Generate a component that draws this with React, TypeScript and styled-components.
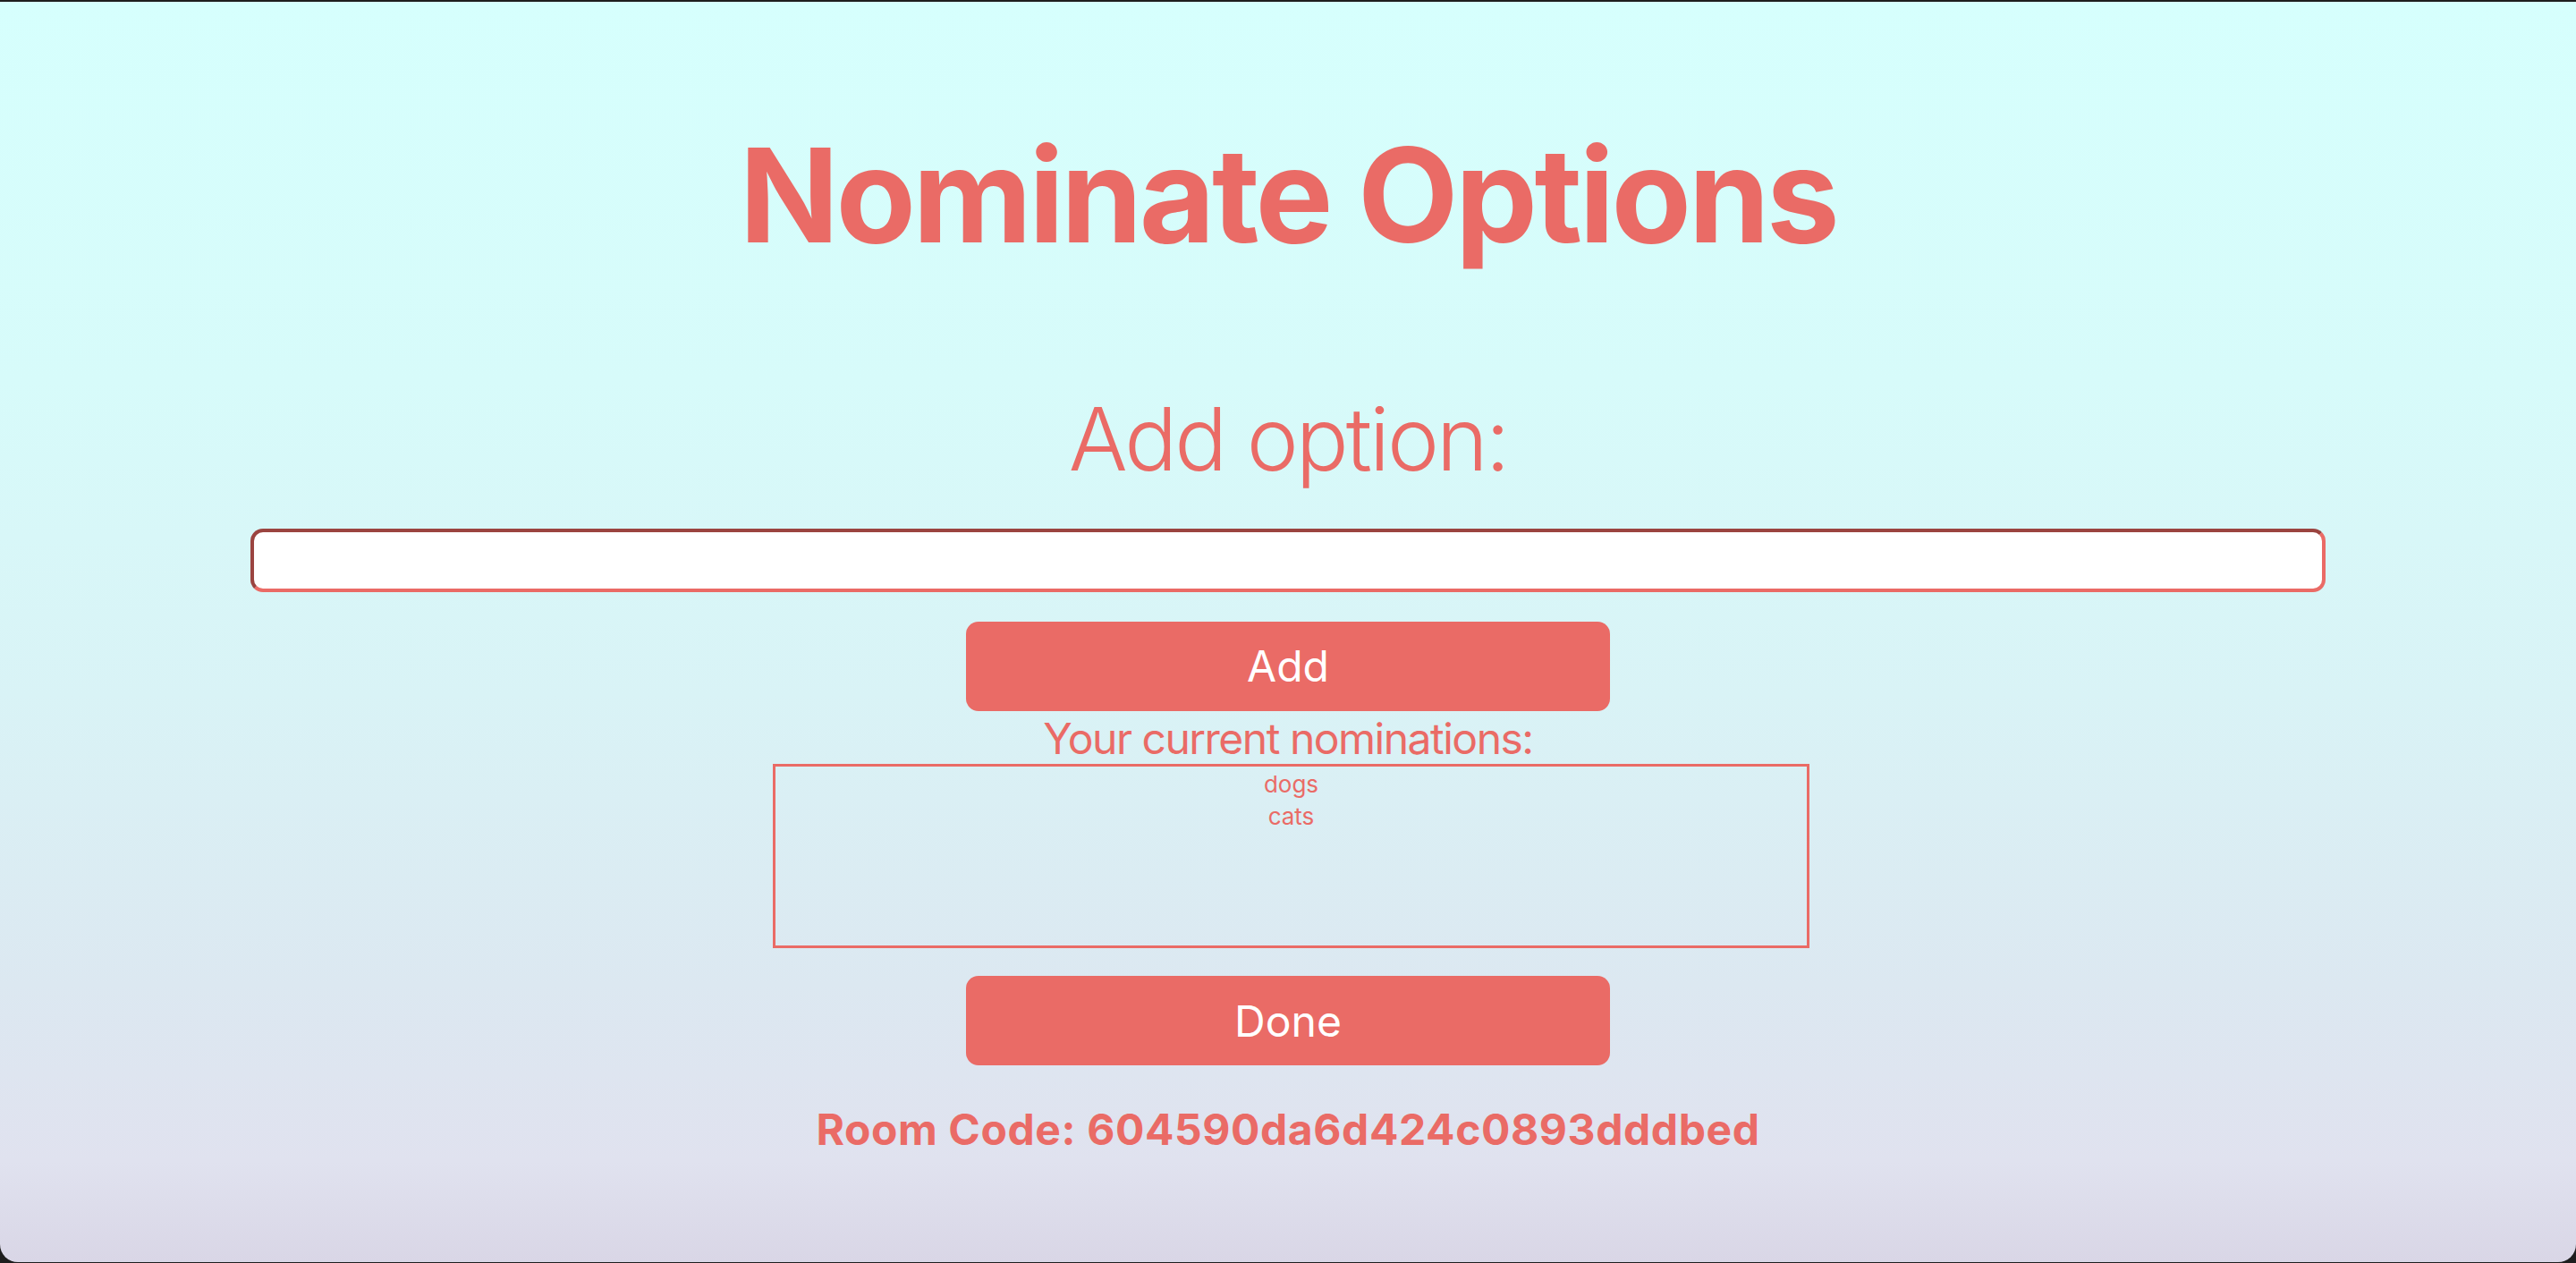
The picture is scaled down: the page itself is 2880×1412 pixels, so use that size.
import React, { FC, useState } from "react";
import styled, { createGlobalStyle } from "styled-components";

const coral = "#ea6b66";

const GlobalStyle = createGlobalStyle`
  html, body {
    margin: 0;
    padding: 0;
    height: 100%;
    background: #1e1e1e;
  }
  #root {
    height: 100%;
  }
  * {
    box-sizing: border-box;
  }
`;

const Window = styled.div`
  height: 1409px;
  margin-top: 2px;
  border-radius: 0 0 20px 20px;
  overflow: hidden;
  background: linear-gradient(
    180deg,
    #d6fffd 0%,
    #d7fbfa 30%,
    #d9f3f6 55%,
    #dce8f1 78%,
    #e0e2ef 92%,
    #d9d6e6 100%
  );
  display: flex;
  flex-direction: column;
  align-items: center;
  padding-top: 129px;
  font-family: Inter, "Noto Sans", sans-serif;
  color: ${coral};
`;

const Title = styled.h1`
  margin: 0;
  font-size: 146px;
  line-height: 1.2;
  font-weight: 700;
  letter-spacing: -3.5px;
`;

const SubTitle = styled.h2`
  margin: 126px 0 0;
  font-size: 98px;
  line-height: 1.2;
  font-weight: 300;
  letter-spacing: -3px;
`;

const OptionInput = styled.input`
  margin-top: 41px;
  width: 2320px;
  height: 71px;
  border: 4px solid;
  border-color: #9b4440 ${coral} ${coral} #9b4440;
  border-radius: 14px;
  background: #fff;
  font-family: inherit;
  font-size: 32px;
  padding: 0 16px;
  outline: none;
`;

const Button = styled.button<{ gap: number }>`
  margin-top: ${({ gap }) => gap}px;
  width: 720px;
  height: 100px;
  border: none;
  border-radius: 14px;
  background: ${coral};
  color: #fff;
  font-family: inherit;
  font-size: 48px;
  font-weight: 400;
  cursor: pointer;
`;

const Label = styled.div`
  margin-top: 2px;
  font-size: 48px;
  line-height: 1.2;
  font-weight: 400;
  letter-spacing: -1.5px;
`;

const NominationList = styled.ul`
  margin: 0 0 0 7px;
  padding: 2px 0;
  width: 1159px;
  height: 206px;
  border: 3px solid ${coral};
  list-style: none;
  overflow-y: auto;
`;

const Nomination = styled.li`
  font-size: 26px;
  line-height: 36px;
  text-align: center;
`;

const RoomCode = styled.div`
  margin-top: 43px;
  font-size: 48px;
  line-height: 1.2;
  font-weight: 700;
  letter-spacing: 0.6px;
`;

const App: FC = () => {
  const [value, setValue] = useState("");
  const [nominations, setNominations] = useState<string[]>(["dogs", "cats"]);

  const addNomination = () => {
    const text = value.trim();
    if (!text) return;
    setNominations([...nominations, text]);
    setValue("");
  };

  return (
    <>
      <GlobalStyle />
      <Window>
        <Title>Nominate Options</Title>
        <SubTitle>Add option:</SubTitle>
        <OptionInput
          value={value}
          onChange={(e) => setValue(e.target.value)}
        />
        <Button gap={33} onClick={addNomination}>
          Add
        </Button>
        <Label>Your current nominations:</Label>
        <NominationList>
          {nominations.map((n, i) => (
            <Nomination key={i}>{n}</Nomination>
          ))}
        </NominationList>
        <Button gap={31}>Done</Button>
        <RoomCode>Room Code: 604590da6d424c0893dddbed</RoomCode>
      </Window>
    </>
  );
};

export default App;
